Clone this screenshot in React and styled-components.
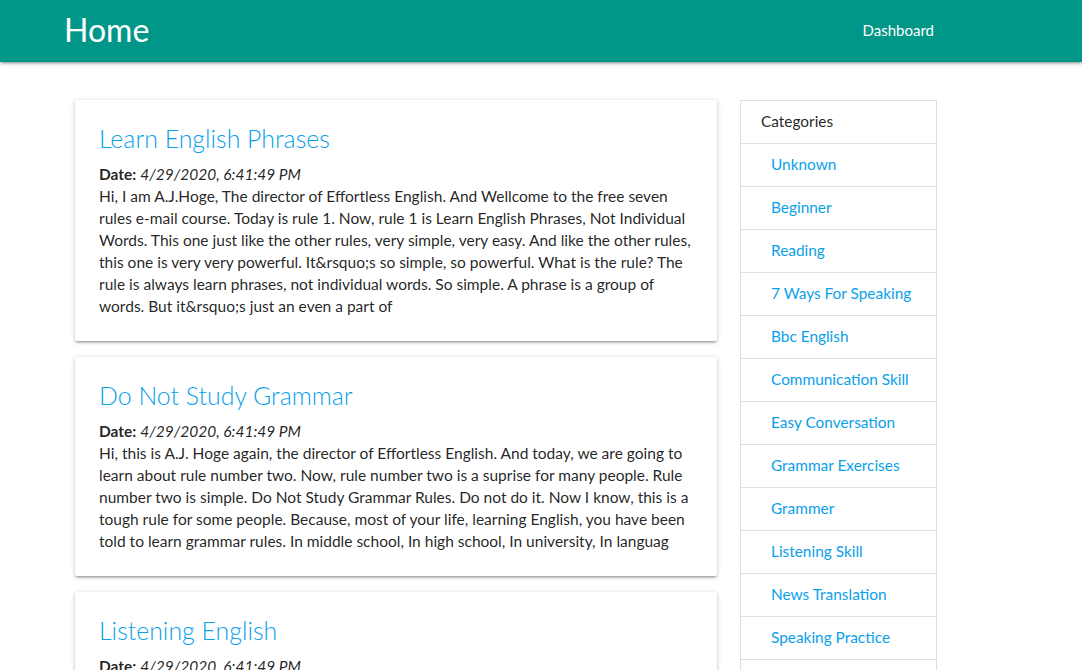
import React from "react";
import styled, { createGlobalStyle } from "styled-components";

const Global = createGlobalStyle`
  html, body { margin: 0; padding: 0; background: #fff; }
  body {
    font-family: Lato, "Open Sans", sans-serif;
    font-size: 15.5px;
    color: rgba(0,0,0,0.87);
  }
  * { box-sizing: border-box; }
`;

const Nav = styled.nav`
  height: 62px;
  background: #009688;
  box-shadow: 0 2px 2px 0 rgba(0,0,0,0.14), 0 3px 1px -2px rgba(0,0,0,0.12), 0 1px 5px 0 rgba(0,0,0,0.2);
  display: flex;
  align-items: center;
  justify-content: space-between;
  padding: 0 148px 3px 64px;
  color: #fff;
`;

const Brand = styled.a`
  font-size: 32px;
  font-weight: 400;
  color: #fff;
  text-decoration: none;
`;

const NavLink = styled.a`
  font-size: 15px;
  color: #fff;
  text-decoration: none;
`;

const Main = styled.main`
  display: flex;
  align-items: flex-start;
  gap: 23px;
  padding: 38px 0 0 75px;
`;

const Posts = styled.div`
  width: 642px;
  display: flex;
  flex-direction: column;
  gap: 16px;
`;

const Card = styled.article`
  background: #fff;
  border-radius: 2px;
  padding: 24px;
  box-shadow: 0 2px 2px 0 rgba(0,0,0,0.14), 0 3px 1px -2px rgba(0,0,0,0.12), 0 1px 5px 0 rgba(0,0,0,0.2);
`;

const Title = styled.a`
  display: block;
  font-size: 24.9px;
  font-weight: 300;
  line-height: 29px;
  color: #0a9fea;
  text-decoration: none;
  margin-bottom: 10px;
`;

const Text = styled.p`
  margin: 0;
  line-height: 22px;
`;

const Sidebar = styled.aside`
  width: 197px;
  border: 1px solid #e0e0e0;
  display: flex;
  flex-direction: column;
`;

const Row = styled.a`
  display: block;
  padding: 9px 0 11px ${(p) => (p.$header ? "20px" : "30px")};
  line-height: 22px;
  font-size: 15.4px;
  color: ${(p) => (p.$header ? "rgba(0,0,0,0.87)" : "#0a9fea")};
  text-decoration: none;
  border-bottom: 1px solid #e0e0e0;
  &:last-child { border-bottom: none; }
`;

const posts = [
  {
    title: "Learn English Phrases",
    body: "Hi, I am A.J.Hoge, The director of Effortless English. And Wellcome to the free seven rules e-mail course. Today is rule 1. Now, rule 1 is Learn English Phrases, Not Individual Words. This one just like the other rules, very simple, very easy. And like the other rules, this one is very very powerful. It&rsquo;s so simple, so powerful. What is the rule? The rule is always learn phrases, not individual words. So simple. A phrase is a group of words. But it&rsquo;s just an even a part of",
  },
  {
    title: "Do Not Study Grammar",
    body: "Hi, this is A.J. Hoge again, the director of Effortless English. And today, we are going to learn about rule number two. Now, rule number two is a suprise for many people. Rule number two is simple. Do Not Study Grammar Rules. Do not do it. Now I know, this is a tough rule for some people. Because, most of your life, learning English, you have been told to learn grammar rules. In middle school, In high school, In university, In languag",
  },
  {
    title: "Listening English",
    body: "Hi, this is A.J. Hoge again, the director of Effortless English. Today we are going to talk about rule number three.",
  },
];

const categories = [
  "Unknown",
  "Beginner",
  "Reading",
  "7 Ways For Speaking",
  "Bbc English",
  "Communication Skill",
  "Easy Conversation",
  "Grammar Exercises",
  "Grammer",
  "Listening Skill",
  "News Translation",
  "Speaking Practice",
  "Vocabulary",
];

export default function App() {
  return (
    <>
      <Global />
      <Nav>
        <Brand href="#">Home</Brand>
        <NavLink href="#">Dashboard</NavLink>
      </Nav>
      <Main>
        <Posts>
          {posts.map((p) => (
            <Card key={p.title}>
              <Title href="#">{p.title}</Title>
              <Text>
                <b>Date:</b> <i>4/29/2020, 6:41:49 PM</i>
              </Text>
              <Text>{p.body}</Text>
            </Card>
          ))}
        </Posts>
        <Sidebar>
          <Row $header as="div">Categories</Row>
          {categories.map((c) => (
            <Row key={c} href="#">{c}</Row>
          ))}
        </Sidebar>
      </Main>
    </>
  );
}
